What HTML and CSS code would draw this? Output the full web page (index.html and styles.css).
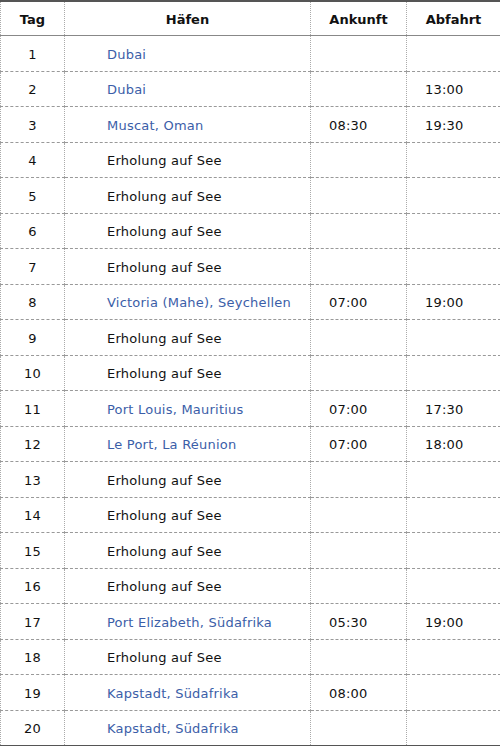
FILE: index.html
```html
<!DOCTYPE html>
<html lang="de">
<head>
<meta charset="utf-8">
<title>Reiseroute</title>
<link rel="stylesheet" href="styles.css">
</head>
<body>
<table class="route">
  <colgroup>
    <col class="c-tag"><col class="c-port"><col class="c-arr"><col class="c-dep">
  </colgroup>
  <thead>
    <tr><th>Tag</th><th>Häfen</th><th>Ankunft</th><th>Abfahrt</th></tr>
  </thead>
  <tbody>
    <tr><td class="day">1</td><td class="port"><a href="#">Dubai</a></td><td class="time"></td><td class="time"></td></tr>
    <tr><td class="day">2</td><td class="port"><a href="#">Dubai</a></td><td class="time"></td><td class="time">13:00</td></tr>
    <tr><td class="day">3</td><td class="port"><a href="#">Muscat, Oman</a></td><td class="time">08:30</td><td class="time">19:30</td></tr>
    <tr><td class="day">4</td><td class="port">Erholung auf See</td><td class="time"></td><td class="time"></td></tr>
    <tr><td class="day">5</td><td class="port">Erholung auf See</td><td class="time"></td><td class="time"></td></tr>
    <tr><td class="day">6</td><td class="port">Erholung auf See</td><td class="time"></td><td class="time"></td></tr>
    <tr><td class="day">7</td><td class="port">Erholung auf See</td><td class="time"></td><td class="time"></td></tr>
    <tr><td class="day">8</td><td class="port"><a href="#">Victoria (Mahe), Seychellen</a></td><td class="time">07:00</td><td class="time">19:00</td></tr>
    <tr><td class="day">9</td><td class="port">Erholung auf See</td><td class="time"></td><td class="time"></td></tr>
    <tr><td class="day">10</td><td class="port">Erholung auf See</td><td class="time"></td><td class="time"></td></tr>
    <tr><td class="day">11</td><td class="port"><a href="#">Port Louis, Mauritius</a></td><td class="time">07:00</td><td class="time">17:30</td></tr>
    <tr><td class="day">12</td><td class="port"><a href="#">Le Port, La Réunion</a></td><td class="time">07:00</td><td class="time">18:00</td></tr>
    <tr><td class="day">13</td><td class="port">Erholung auf See</td><td class="time"></td><td class="time"></td></tr>
    <tr><td class="day">14</td><td class="port">Erholung auf See</td><td class="time"></td><td class="time"></td></tr>
    <tr><td class="day">15</td><td class="port">Erholung auf See</td><td class="time"></td><td class="time"></td></tr>
    <tr><td class="day">16</td><td class="port">Erholung auf See</td><td class="time"></td><td class="time"></td></tr>
    <tr><td class="day">17</td><td class="port"><a href="#">Port Elizabeth, Südafrika</a></td><td class="time">05:30</td><td class="time">19:00</td></tr>
    <tr><td class="day">18</td><td class="port">Erholung auf See</td><td class="time"></td><td class="time"></td></tr>
    <tr><td class="day">19</td><td class="port"><a href="#">Kapstadt, Südafrika</a></td><td class="time">08:00</td><td class="time"></td></tr>
    <tr><td class="day">20</td><td class="port"><a href="#">Kapstadt, Südafrika</a></td><td class="time"></td><td class="time"></td></tr>
  </tbody>
</table>
</body>
</html>
```
FILE: styles.css
```css
html, body {
  margin: 0;
  padding: 0;
  background: #fff;
}
body {
  font-family: "DejaVu Sans", Verdana, sans-serif;
  font-size: 13px;
  color: #111;
}
.route {
  width: 500px;
  border-collapse: collapse;
  table-layout: fixed;
  border-top: 2px solid #555;
  border-bottom: 2px solid #555;
}
.c-tag { width: 64px; }
.c-port { width: 246px; }
.c-arr { width: 96px; }
.c-dep { width: 94px; }
.route th,
.route td {
  border-left: 1px dotted #aaa;
  border-right: 1px dotted #aaa;
  padding: 0;
}
.route th {
  height: 32px;
  padding-top: 1px;
  font-weight: bold;
  text-align: center;
  border-bottom: 1px solid #888;
}
.route td {
  height: 32.5px;
  padding-top: 2px;
  border-bottom: 1px dashed #999;
  letter-spacing: 0.22px;
}
.route .day { text-align: center; }
.route .port { padding-left: 42px; }
.route .time { padding-left: 18px; }
.route .port a {
  color: #3b5ea8;
  text-decoration: none;
}
```
